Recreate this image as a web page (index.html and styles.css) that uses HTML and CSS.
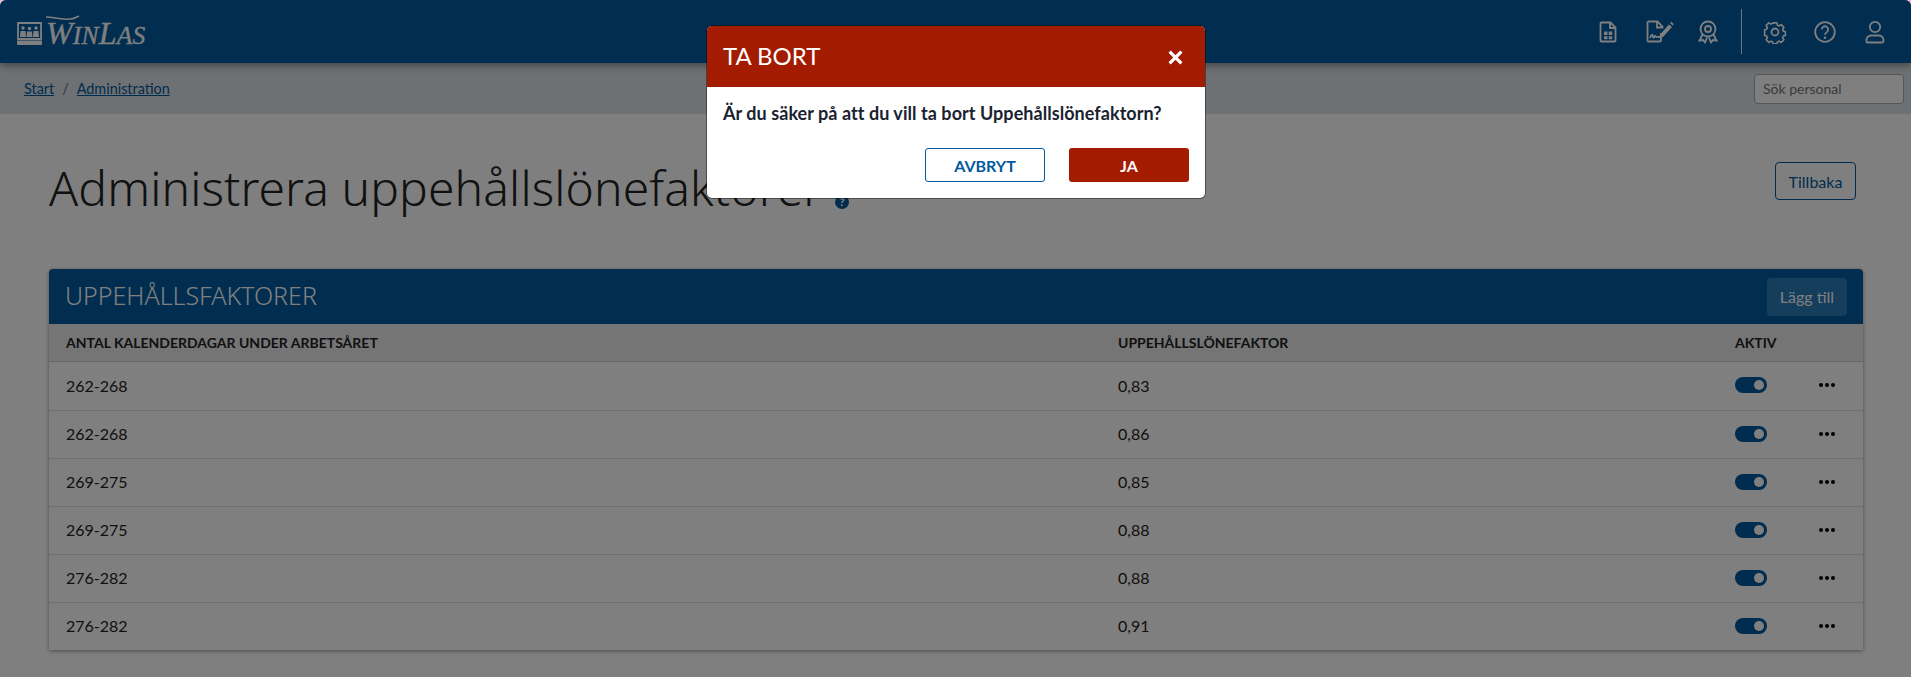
FILE: index.html
```html
<!DOCTYPE html>
<html lang="sv">
<head>
<meta charset="utf-8">
<title>Administrera uppehållslönefaktorer</title>
<link rel="stylesheet" href="styles.css">
</head>
<body>
<div class="window">
  <header class="topbar">
    <a class="logo">
      <svg class="logo-icon" viewBox="0 0 25 23" width="25" height="23"><path class="ic" d="M1 1h23v16H1z" stroke-width="1.4"/><path class="fill" d="M0 18.500h25V22a1 1 0 0 1-1 1H1a1 1 0 0 1-1-1z"/><g class="fill"><circle cx="6" cy="6" r="1.700"/><circle cx="12.500" cy="6.500" r="1.700"/><circle cx="19" cy="6" r="1.700"/><path d="M3.500 9h5l.5 6H3zM10 9.500h5l.5 5.500h-6zM16.500 9h5l.5 6h-6z"/></g></svg>
      <span class="logo-text">W<small>IN</small>L<small>AS</small></span>
      <svg class="logo-swash" viewBox="0 0 34 6" width="34" height="6"><path d="M0 2c8 0 14 3 24 2 4 0 7-2 9-3" fill="none" stroke="#fff" stroke-width="1.500"/></svg>
    </a>
    <nav class="tools">
      <svg class="tool" viewBox="0 0 24 24" width="24" height="24"><path class="ic" d="M5.500 2.500h9l5 5v13a1 1 0 0 1-1 1h-13a1 1 0 0 1-1-1v-17a1 1 0 0 1 1-1zM14 3v5h5"/><path class="fill" d="M8 11.500h3.500v3.500H8zM12.700 11.500h3.500v3.500h-3.500zM8 16.200h3.500v3H8zM12.700 16.200h3.500v3h-3.500z"/></svg>
      <svg class="tool tool-sign" viewBox="0 0 28 24" width="28" height="24"><path class="ic" d="M15 13v7.500a1 1 0 0 1-1 1H2.500a1 1 0 0 1-1-1v-18a1 1 0 0 1 1-1h9l5 5v2M11 2v5.500h5.500"/><path class="ic" stroke-width="1.200" d="M4 18c1.500-4 2.500-4 3-1.500s1.500 0 2-.5 1 1.500 2 1 2 0 3 0"/><path class="fill" d="M23 4.500l3 2.500-9 10-3.500 1 .5-3.500zM24 3l1.300-1.300 2.500 2.300-1.200 1.500z"/></svg>
      <svg class="tool tool-award" viewBox="0 0 24 24" width="24" height="24"><circle class="ic" cx="12" cy="9" r="7.500"/><circle class="ic" cx="12" cy="9" r="3" /><path class="ic" d="M6.500 14.500L3.500 20.500l3.500-.5 2 2.500 2-5M17.500 14.500l3 6-3.500-.5-2 2.500-2-5"/></svg>
      <span class="divider"></span>
      <svg class="tool" viewBox="0 0 24 24" width="24" height="24"><path class="ic" d="M9.900 1.800h4.200l.6 2.600 1.900.8 2.300-1.400 3 3-1.400 2.300.8 1.900 2.200.6v4.200l-2.200.6-.8 1.900 1.400 2.300-3 3-2.300-1.400-1.900.8-.6 2.200H9.900l-.6-2.200-1.900-.8-2.300 1.400-3-3 1.400-2.300-.8-1.900-2.200-.6V9.600l2.200-.6.800-1.900-1.400-2.300 3-3 2.300 1.400 1.900-.8z" transform="translate(1.200 1.200) scale(.9)" stroke-linejoin="round"/><circle class="ic" cx="12" cy="12" r="3.500"/></svg>
      <svg class="tool" viewBox="0 0 24 24" width="24" height="24"><circle class="ic" cx="12" cy="12" r="9.800"/><path class="ic" stroke-width="2.200" d="M8.800 9.500a3.200 3.200 0 1 1 4.900 2.700c-1.100.7-1.700 1.300-1.700 2.600"/><circle class="fill" cx="12" cy="17.700" r="1.300"/></svg>
      <svg class="tool" viewBox="0 0 24 24" width="24" height="24"><circle class="ic" cx="12" cy="7" r="5.200"/><path class="ic" d="M3.500 22.500v-2.500a4.500 4.500 0 0 1 4.500-4.500h8a4.500 4.500 0 0 1 4.500 4.500v1a1.500 1.500 0 0 1-1.500 1.500H4.500a1 1 0 0 1-1-.5z"/></svg>
    </nav>
  </header>

  <div class="crumbbar">
    <nav class="crumbs"><a href="#">Start</a><span class="sep">/</span><a href="#">Administration</a></nav>
    <input class="search" type="text" placeholder="Sök personal">
  </div>

  <main class="content">
    <div class="titlerow">
      <h1>Administrera uppehållslönefaktorer <span class="help">?</span></h1>
      <button class="btn-back" type="button">Tillbaka</button>
    </div>

    <section class="card">
      <div class="card-head">
        <h2>UPPEHÅLLSFAKTORER</h2>
        <button class="btn-add" type="button">Lägg till</button>
      </div>
      <div class="row row-head"><span>ANTAL KALENDERDAGAR UNDER ARBETSÅRET</span><span>UPPEHÅLLSLÖNEFAKTOR</span><span>AKTIV</span><span></span></div>
      <div class="row"><span>262-268</span><span>0,83</span><span class="toggle"></span><span class="dots"><i></i><i></i><i></i></span></div>
      <div class="row"><span>262-268</span><span>0,86</span><span class="toggle"></span><span class="dots"><i></i><i></i><i></i></span></div>
      <div class="row"><span>269-275</span><span>0,85</span><span class="toggle"></span><span class="dots"><i></i><i></i><i></i></span></div>
      <div class="row"><span>269-275</span><span>0,88</span><span class="toggle"></span><span class="dots"><i></i><i></i><i></i></span></div>
      <div class="row"><span>276-282</span><span>0,88</span><span class="toggle"></span><span class="dots"><i></i><i></i><i></i></span></div>
      <div class="row"><span>276-282</span><span>0,91</span><span class="toggle"></span><span class="dots"><i></i><i></i><i></i></span></div>
    </section>
  </main>

  <div class="backdrop"></div>

  <div class="modal" role="dialog">
    <div class="modal-head">
      <span class="modal-title">TA BORT</span>
      <svg class="modal-close" viewBox="0 0 14 14" width="15" height="15"><path d="M1.500 1.500l11 11M12.500 1.500l-11 11" stroke="#fff" stroke-width="3" fill="none"/></svg>
    </div>
    <p class="modal-msg">Är du säker på att du vill ta bort Uppehållslönefaktorn?</p>
    <div class="modal-actions">
      <button class="btn btn-outline" type="button">AVBRYT</button>
      <button class="btn btn-danger" type="button">JA</button>
    </div>
  </div>
</div>
</body>
</html>
```
FILE: styles.css
```css
* { box-sizing: border-box; }
html { background: #f7b8d4; }
body { margin: 0; font-family: Lato, "Liberation Sans", sans-serif; color: #222; }

.window {
  position: relative;
  height: 677px;
  overflow: hidden;
  background: #fff;
  border-radius: 6px 6px 0 0;
}

/* top bar */
.topbar {
  height: 63px;
  background: #005aa0;
  display: flex;
  align-items: center;
  justify-content: space-between;
  padding: 0 24px 0 17px;
  box-shadow: 0 2px 8px rgba(0,0,0,.45);
  position: relative;
}
.logo { display: flex; align-items: center; gap: 4px; position: relative; color: #fff; }
.logo-icon { display: block; margin-top: 3px; }
.logo-text {
  font-family: "Liberation Serif", serif;
  font-style: italic;
  font-size: 32px;
  line-height: 36px;
  letter-spacing: .2px;
  margin-top: 5px;
  -webkit-text-stroke: .3px #fff;
}
.logo-text small { font-size: 25.5px; }
.logo-swash { position: absolute; left: 29px; top: 5px; }
.ic { fill: none; stroke: #fff; stroke-width: 1.800; }
.fill { fill: #fff; }
.tools { display: flex; align-items: center; }
.tool { display: block; margin-left: 26px; }
.tool-sign { margin-left: 26px; margin-right: -4px; }
.divider { width: 1px; height: 45px; background: #fff; margin-left: 21px; margin-right: -5px; opacity: .9; }

/* breadcrumb */
.crumbbar {
  height: 51px;
  background: #dce2e6;
  display: flex;
  align-items: center;
  justify-content: space-between;
  padding: 0 7px 0 24px;
}
.crumbs { font-size: 14.4px; display: flex; gap: 8px; }
.crumbs a { color: #005a9f; text-decoration: underline; }
.sep { color: #666; }
.search {
  width: 150px;
  height: 30px;
  border: 1px solid #aaa;
  border-radius: 4px;
  background: #fff;
  padding: 0 8px;
  font: 14px Lato, sans-serif;
}
.search::placeholder { color: #777; opacity: 1; }

/* content */
.content { padding: 0 48px 0 49px; }
.titlerow {
  height: 155px;
  display: flex;
  justify-content: space-between;
  align-items: flex-start;
  padding: 48px 7px 0 0;
}
h1 {
  margin: -2px 0 0;
  font-family: "Noto Sans", sans-serif;
  font-weight: 300;
  font-size: 48px;
  line-height: 56px;
  letter-spacing: .1px;
  color: #222;
}
.help {
  display: inline-block;
  width: 14px;
  height: 14px;
  border-radius: 50%;
  background: #005a9f;
  color: #fff;
  font: 900 11px/14px Lato, sans-serif;
  text-align: center;
  vertical-align: 0;
  letter-spacing: 0;
}
.btn-back {
  width: 81px;
  height: 38px;
  border: 1px solid #005a9f;
  border-radius: 4px;
  background: #fff;
  color: #005a9f;
  font: 16px Lato, sans-serif;
  padding: 0;
}

/* card */
.card {
  border-radius: 4px 4px 0 0;
  box-shadow: 0 1px 4px rgba(0,0,0,.4);
  background: #fff;
}
.card-head {
  height: 55px;
  background: #005aa0;
  border-radius: 4px 4px 0 0;
  display: flex;
  align-items: center;
  justify-content: space-between;
  padding: 0 16px 0 16px;
}
h2 {
  margin: -3px 0 0;
  font-family: "Noto Sans", sans-serif;
  font-weight: 300;
  font-size: 25px;
  color: #fff;
}
.btn-add {
  width: 80px;
  height: 38px;
  border: 0;
  border-radius: 4px;
  background: #2a7ab8;
  color: #fff;
  font: 16px Lato, sans-serif;
  padding: 0;
}
.row {
  height: 48px;
  display: grid;
  grid-template-columns: 1069px 617px 92px 1fr;
  align-items: center;
  padding: 0 0 2px 17px;
  border-top: 1px solid #dedede;
  font-size: 16px;
}
.row > :first-child { margin-right: 17px; }
.row > :nth-child(2) { margin-left: -17px; }
.row-head {
  height: 38px;
  background: #eaeaea;
  border-top: 0;
  border-bottom: 1px solid #d0d0d0;
  padding-bottom: 0;
  font-size: 14px;
  font-weight: 700;
}
.row-head + .row { border-top: 0; }
.toggle {
  position: relative;
  width: 32px;
  height: 16px;
  border-radius: 8px;
  background: #005a9f;
  margin-left: -17px;
}
.toggle::after {
  content: "";
  position: absolute;
  right: 3px;
  top: 3px;
  width: 10px;
  height: 10px;
  border-radius: 50%;
  background: #fff;
}
.row-head > :nth-child(3) { margin-left: -17px; }
.dots { display: flex; gap: 2px; margin-left: -25px; }
.dots i { width: 4px; height: 4px; border-radius: 50%; background: #000; }

/* modal */
.backdrop { position: absolute; inset: 0; background: rgba(0,0,0,.5); }
.modal {
  position: absolute;
  left: 707px;
  top: 26px;
  width: 498px;
  height: 172px;
  background: #fff;
  border-radius: 5px;
  box-shadow: 0 0 0 1px rgba(0,0,0,.4);
  overflow: hidden;
}
.modal-head {
  height: 61px;
  background: #a31b00;
  display: flex;
  align-items: center;
  justify-content: space-between;
  padding: 0 22px 0 16px;
}
.modal-title { color: #fff; font-size: 24px; margin-top: -2px; }
.modal-close { margin-top: 2px; }
.modal-msg {
  margin: 0;
  padding: 13px 16px 0;
  font-size: 18px;
  line-height: 26px;
  font-weight: 700;
  letter-spacing: .05px;
  color: #1a2230;
}
.modal-actions {
  display: flex;
  justify-content: flex-end;
  gap: 24px;
  padding: 22px 16px 0;
}
.btn {
  width: 120px;
  height: 34px;
  border-radius: 3px;
  font: 700 16px Lato, sans-serif;
  padding: 0;
}
.btn-outline { background: #fff; border: 1px solid #005a9f; color: #005a9f; }
.btn-danger { background: #a31b00; border: 0; color: #fff; }
```
